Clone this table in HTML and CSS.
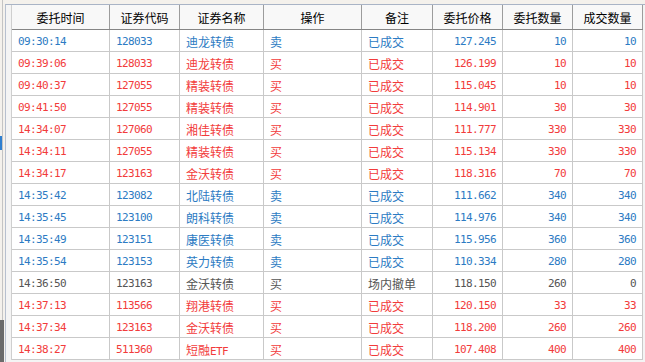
FILE: index.html
```html
<!DOCTYPE html>
<html lang="zh-CN">
<head>
<meta charset="utf-8">
<title>委托记录</title>
<link rel="stylesheet" href="styles.css">
</head>
<body>
<div class="gutter">
  <div class="gutter-mark"></div>
  <div class="gutter-thumb"></div>
</div>
<div class="frame">
  <div class="grid">
    <div class="row head">
      <div class="c">委托时间</div><div class="c">证券代码</div><div class="c">证券名称</div><div class="c">操作</div><div class="c">备注</div><div class="c">委托价格</div><div class="c">委托数量</div><div class="c">成交数量</div>
    </div>
    <div class="row sell"><div class="c n">09:30:14</div><div class="c n">128033</div><div class="c">迪龙转债</div><div class="c">卖</div><div class="c">已成交</div><div class="c n r">127.245</div><div class="c n r">10</div><div class="c n r">10</div></div>
    <div class="row buy"><div class="c n">09:39:06</div><div class="c n">128033</div><div class="c">迪龙转债</div><div class="c">买</div><div class="c">已成交</div><div class="c n r">126.199</div><div class="c n r">10</div><div class="c n r">10</div></div>
    <div class="row buy"><div class="c n">09:40:37</div><div class="c n">127055</div><div class="c">精装转债</div><div class="c">买</div><div class="c">已成交</div><div class="c n r">115.045</div><div class="c n r">10</div><div class="c n r">10</div></div>
    <div class="row buy"><div class="c n">09:41:50</div><div class="c n">127055</div><div class="c">精装转债</div><div class="c">买</div><div class="c">已成交</div><div class="c n r">114.901</div><div class="c n r">30</div><div class="c n r">30</div></div>
    <div class="row buy"><div class="c n">14:34:07</div><div class="c n">127060</div><div class="c">湘佳转债</div><div class="c">买</div><div class="c">已成交</div><div class="c n r">111.777</div><div class="c n r">330</div><div class="c n r">330</div></div>
    <div class="row buy"><div class="c n">14:34:11</div><div class="c n">127055</div><div class="c">精装转债</div><div class="c">买</div><div class="c">已成交</div><div class="c n r">115.134</div><div class="c n r">330</div><div class="c n r">330</div></div>
    <div class="row buy"><div class="c n">14:34:17</div><div class="c n">123163</div><div class="c">金沃转债</div><div class="c">买</div><div class="c">已成交</div><div class="c n r">118.316</div><div class="c n r">70</div><div class="c n r">70</div></div>
    <div class="row sell"><div class="c n">14:35:42</div><div class="c n">123082</div><div class="c">北陆转债</div><div class="c">卖</div><div class="c">已成交</div><div class="c n r">111.662</div><div class="c n r">340</div><div class="c n r">340</div></div>
    <div class="row sell"><div class="c n">14:35:45</div><div class="c n">123100</div><div class="c">朗科转债</div><div class="c">卖</div><div class="c">已成交</div><div class="c n r">114.976</div><div class="c n r">340</div><div class="c n r">340</div></div>
    <div class="row sell"><div class="c n">14:35:49</div><div class="c n">123151</div><div class="c">康医转债</div><div class="c">卖</div><div class="c">已成交</div><div class="c n r">115.956</div><div class="c n r">360</div><div class="c n r">360</div></div>
    <div class="row sell"><div class="c n">14:35:54</div><div class="c n">123153</div><div class="c">英力转债</div><div class="c">卖</div><div class="c">已成交</div><div class="c n r">110.334</div><div class="c n r">280</div><div class="c n r">280</div></div>
    <div class="row cancel"><div class="c n">14:36:50</div><div class="c n">123163</div><div class="c">金沃转债</div><div class="c">买</div><div class="c">场内撤单</div><div class="c n r">118.150</div><div class="c n r">260</div><div class="c n r">0</div></div>
    <div class="row buy"><div class="c n">14:37:13</div><div class="c n">113566</div><div class="c">翔港转债</div><div class="c">买</div><div class="c">已成交</div><div class="c n r">120.150</div><div class="c n r">33</div><div class="c n r">33</div></div>
    <div class="row buy"><div class="c n">14:37:34</div><div class="c n">123163</div><div class="c">金沃转债</div><div class="c">买</div><div class="c">已成交</div><div class="c n r">118.200</div><div class="c n r">260</div><div class="c n r">260</div></div>
    <div class="row buy"><div class="c n">14:38:27</div><div class="c n">511360</div><div class="c">短融<span class="lat">ETF</span></div><div class="c">买</div><div class="c">已成交</div><div class="c n r">107.408</div><div class="c n r">400</div><div class="c n r">400</div></div>
  </div>
</div>
</body>
</html>
```
FILE: styles.css
```css
html, body {
  margin: 0;
  padding: 0;
}
body {
  width: 645px;
  height: 362px;
  overflow: hidden;
  display: flex;
  background: #f4f1ec;
  font-family: "Noto Sans CJK SC", "Liberation Sans", sans-serif;
  font-size: 12px;
}
.gutter {
  width: 4px;
  flex: none;
  margin-right: 1px;
  display: flex;
  flex-direction: column;
  background: linear-gradient(to right, transparent 2px, #c4c4c4 2px, #c4c4c4 3px, transparent 3px);
}
.gutter-mark {
  width: 2px;
  height: 14px;
  margin-top: 136px;
  background: #2f7fd0;
}
.gutter-thumb {
  margin-top: auto;
  height: 42px;
  width: 4px;
  background: #6b6b6b;
}
.frame {
  flex: 1;
  margin-top: 4px;
  border-top: 1px solid #a9b4c6;
  border-left: 1px solid #b7c0cf;
  background: #f4f4f4;
  padding-left: 5px;
  overflow: hidden;
}
.grid {
  width: 631px;
  border-left: 1px solid #cfcfcf;
  background: #ffffff;
}
.row {
  display: grid;
  grid-template-columns: 98px 70px 84px 98px 71px 70px 70px 70px;
  height: 22px;
  border-bottom: 1px solid #c9c9c9;
  box-sizing: border-box;
}
.c {
  box-sizing: border-box;
  border-right: 1px solid #c9c9c9;
  padding: 0 6px;
  line-height: 23px;
  white-space: nowrap;
  overflow: hidden;
}
.head {
  height: 25px;
  background: #f8f8f8;
  border-bottom: 1px solid #858585;
  color: #000;
}
.head .c {
  text-align: center;
  line-height: 25px;
  padding: 0;
  border-right-color: #9c9c9c;
}
.n {
  font-family: "DejaVu Sans Mono", "Liberation Mono", monospace;
  font-size: 11px;
  letter-spacing: -0.62px;
}
.r {
  text-align: right;
  padding-right: 6px;
}
.lat {
  font-family: "DejaVu Sans Mono", monospace;
  font-size: 11px;
  letter-spacing: -0.6px;
}
.sell { color: #2c7bc3; }
.buy { color: #f23b3b; }
.cancel { color: #555555; }
```
